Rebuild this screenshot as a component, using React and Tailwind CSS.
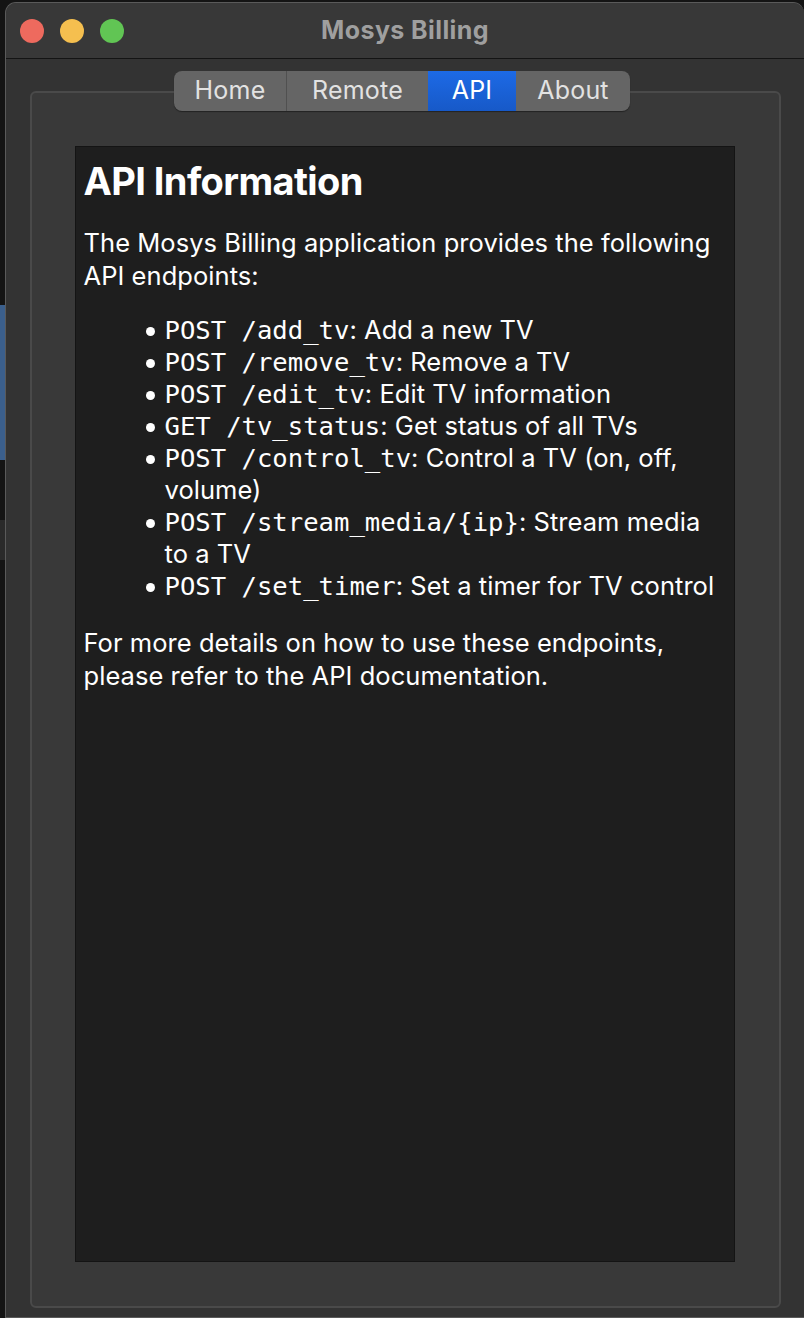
import React from "react";

const tabs = [
  { label: "Home", w: "w-[113px]" },
  { label: "Remote", w: "w-[141px]" },
  { label: "API", w: "w-[88px]", active: true },
  { label: "About", w: "w-[114px]" },
];

const endpoints = [
  { code: "POST /add_tv", text: "Add a new TV" },
  { code: "POST /remove_tv", text: "Remove a TV" },
  { code: "POST /edit_tv", text: "Edit TV information" },
  { code: "GET /tv_status", text: "Get status of all TVs" },
  { code: "POST /control_tv", text: "Control a TV (on, off, volume)" },
  { code: "POST /stream_media/{ip}", text: "Stream media to a TV" },
  { code: "POST /set_timer", text: "Set a timer for TV control" },
];

const sans = { fontFamily: "Inter, 'Noto Sans', sans-serif" };

const App = () => {
  return (
    <div className="w-[804px] h-[1318px] bg-[#141414] flex overflow-hidden" style={sans}>
      {/* strip of the window behind */}
      <div className="w-[5px] flex flex-col shrink-0">
        <div className="h-[305px]" />
        <div className="h-[155px] bg-[#3b5f8c]" />
        <div className="h-[60px]" />
        <div className="h-[40px] bg-[#2a2a2a]" />
      </div>

      <div className="mt-[2px] w-[799px] h-[1316px] rounded-t-[11px] border border-[#5a5a5a] border-r-0 bg-[#333333] flex flex-col overflow-hidden">
        {/* title bar */}
        <div className="h-[56px] shrink-0 bg-[#383838] border-b border-[#141414] flex items-center relative">
          <div className="flex gap-[16px] pl-[14px]">
            <span className="w-[24px] h-[24px] rounded-full bg-[#ee6a5e]" />
            <span className="w-[24px] h-[24px] rounded-full bg-[#f5bf4f]" />
            <span className="w-[24px] h-[24px] rounded-full bg-[#61c554]" />
          </div>
          <div className="absolute inset-0 flex items-center justify-center text-[25px] tracking-[0.4px] font-bold text-[#9f9f9f] pointer-events-none">
            Mosys Billing
          </div>
        </div>

        {/* body */}
        <div className="flex-1 flex flex-col items-center pt-[12px] px-[23px]">
          <div className="relative z-10 flex h-[40px] rounded-[8px] bg-[#656565] overflow-hidden shadow-[0_1px_1px_rgba(0,0,0,0.4)] mb-[-20px] ml-[-6px]">
            {tabs.map((t, i) => (
              <div
                key={t.label}
                className={`${t.w} flex items-center justify-center text-[25px] tracking-[0.2px] ${
                  t.active
                    ? "bg-gradient-to-b from-[#1d6ae6] to-[#1759c8] text-white"
                    : "text-[#e2e2e2]"
                } ${i === 0 ? "border-r border-[#505050]" : ""}`}
              >
                {t.label}
              </div>
            ))}
          </div>

          <div className="w-[751px] h-[1217px] rounded-[6px] border-2 border-[#4a4a4a] bg-[#393939] pt-[53px] pl-[43px]">
            <div className="w-[660px] h-[1116px] bg-[#1e1e1e] border border-[#141414] pl-[8px] pr-[8px] pt-[10px] text-white">
              <h1 className="text-[38px] font-bold leading-[48px] tracking-[-0.6px]">API Information</h1>
              <p className="text-[25.5px] tracking-[0.05px] leading-[33px] mt-[21px]">
                The Mosys Billing application provides the following API endpoints:
              </p>
              <ul className="mt-[22px] pl-[62px] text-[25.5px] tracking-[0.05px] leading-[32px]">
                {endpoints.map((e) => (
                  <li key={e.code} className="flex">
                    <span className="w-[19px] h-[32px] shrink-0 flex items-center">
                      <span className="w-[9px] h-[9px] rounded-full bg-white mt-[2px]" />
                    </span>
                    <span>
                      <code
                        className="text-[25.6px] leading-none tracking-normal"
                        style={{ fontFamily: "'DejaVu Sans Mono', monospace" }}
                      >
                        {e.code.replace(" ", "\u00a0")}
                      </code>
                      : {e.text}
                    </span>
                  </li>
                ))}
              </ul>
              <p className="text-[25.5px] tracking-[0.05px] leading-[33px] mt-[24px]">
                For more details on how to use these endpoints, please refer to the API documentation.
              </p>
            </div>
          </div>
        </div>
      </div>
    </div>
  );
};

export default App;
